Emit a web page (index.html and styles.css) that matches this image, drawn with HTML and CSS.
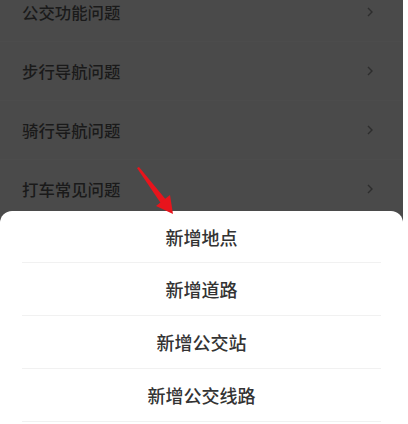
FILE: index.html
```html
<!DOCTYPE html>
<html lang="zh-CN">
<head>
<meta charset="UTF-8">
<meta name="viewport" content="width=device-width, initial-scale=1.0">
<title>新增</title>
<link rel="stylesheet" href="styles.css">
</head>
<body>

<div class="screen">
  <div class="list">
    <div class="rows">
      <div class="row"><span>公交功能问题</span><svg class="chev" width="6" height="10" viewBox="0 0 6 10"><path d="M1 1l4 4-4 4" fill="none" stroke="#2d2d2d" stroke-width="1.4"/></svg></div>
      <div class="row"><span>步行导航问题</span><svg class="chev" width="6" height="10" viewBox="0 0 6 10"><path d="M1 1l4 4-4 4" fill="none" stroke="#2d2d2d" stroke-width="1.4"/></svg></div>
      <div class="row"><span>骑行导航问题</span><svg class="chev" width="6" height="10" viewBox="0 0 6 10"><path d="M1 1l4 4-4 4" fill="none" stroke="#2d2d2d" stroke-width="1.4"/></svg></div>
      <div class="row"><span>打车常见问题</span><svg class="chev" width="6" height="10" viewBox="0 0 6 10"><path d="M1 1l4 4-4 4" fill="none" stroke="#2d2d2d" stroke-width="1.4"/></svg></div>
    </div>
  </div>

  <div class="sheet">
    <div class="item">新增地点</div>
    <div class="item">新增道路</div>
    <div class="item">新增公交站</div>
    <div class="item">新增公交线路</div>
  </div>

  <!-- red arrow drawn over the screenshot -->
  <svg class="arrow" width="50" height="60" viewBox="0 0 50 60">
    <path d="M1 2 L3 1 L31 35 L26 39 Z" fill="#e8141c"/>
    <path d="M20 40 L37 48 L34 29 Z" fill="#e8141c"/>
  </svg>
</div>

</body>
</html>
```

FILE: styles.css
```css
body {
  margin: 0;
  background: #fff;
  font-family: "Noto Sans CJK SC", "Noto Sans", sans-serif;
}
.screen {
  position: relative;
  width: 408px;
  height: 424px;
  overflow: hidden;
}
.list {
  width: 403px;
  height: 222px;
  overflow: hidden;
  background: #4a4a4a;
}
.rows {
  margin-top: -17px;
}
.row {
  height: 59px;
  display: flex;
  align-items: center;
  justify-content: space-between;
  padding: 0 30px 0 22px;
  box-sizing: border-box;
  border-bottom: 1px solid #4c4c4c;
  font-size: 16.4px;
  font-weight: 500;
  color: #1a1a1a;
}
.sheet {
  width: 403px;
  margin-top: -11px;
  position: relative;
  background: #fff;
  border-radius: 12px 12px 0 0;
}
.item {
  height: 52px;
  margin: 0 22px;
  display: flex;
  align-items: center;
  justify-content: center;
  border-bottom: 1px solid #f1f1f1;
  font-size: 18px;
  font-weight: 500;
  color: #333;
}
.item:first-child {
  height: 51px;
}
.arrow {
  position: absolute;
  left: 136px;
  top: 166px;
}
```
